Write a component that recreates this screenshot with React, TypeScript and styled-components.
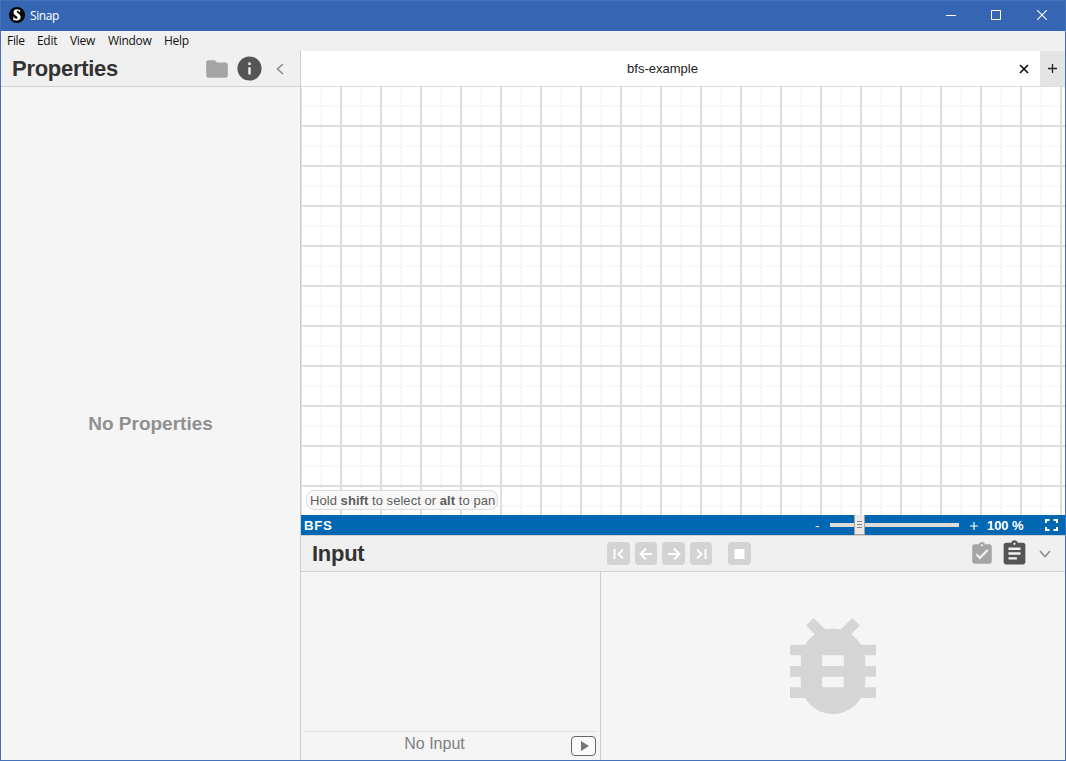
import React from 'react';
import styled, { createGlobalStyle } from 'styled-components';

const GlobalStyle = createGlobalStyle`
  * { box-sizing: border-box; }
  body { margin: 0; font-family: "Liberation Sans", Arial, sans-serif; color: #333; overflow: hidden; }
  svg { display: block; }
`;

const Window = styled.div`
  width: 1066px;
  height: 761px;
  display: flex;
  flex-direction: column;
  border: 1px solid #4472b9;
  background: #f0f0f0;
`;

const TitleBar = styled.header`
  height: 30px;
  flex: none;
  display: flex;
  align-items: center;
  padding: 0 0 2px 8px;
  background: #3665b3;
  color: #fff;
  font: 12px "Open Sans", sans-serif;
`;

const AppTitle = styled.span`
  margin-left: 5px;
  flex: 1;
  letter-spacing: -0.4px;
`;

const WindowButton = styled.div<{ $width: number }>`
  width: ${(p) => p.$width}px;
  height: 28px;
  display: flex;
  align-items: center;
  justify-content: center;
`;

const MenuBar = styled.nav`
  height: 20px;
  flex: none;
  display: flex;
  padding-left: 6px;
  background: #f0f0f0;
  color: #111;
  font: 12px/20px "Open Sans", sans-serif;
`;

const MenuItem = styled.span<{ $width: number }>`
  width: ${(p) => p.$width}px;
  letter-spacing: -0.3px;
  white-space: nowrap;
`;

const Workspace = styled.main`
  flex: 1;
  min-height: 0;
  display: flex;
`;

const Sidebar = styled.aside`
  width: 300px;
  display: flex;
  flex-direction: column;
  background: #f5f5f5;
  border-right: 1px solid #ccc;
`;

const PanelHeader = styled.div`
  height: 36px;
  flex: none;
  display: flex;
  align-items: center;
  background: #f0f0f0;
  border-bottom: 1px solid #d0d0d0;
`;

const PanelTitle = styled.h1<{ $width: number }>`
  width: ${(p) => p.$width}px;
  margin: 0 0 0 11px;
  font-size: 22px;
  line-height: 34px;
  letter-spacing: -0.28px;
`;

const EmptyProperties = styled.div`
  flex: 1;
  display: flex;
  align-items: center;
  justify-content: center;
  color: #909090;
  font-size: 19px;
  font-weight: bold;
`;

const Editor = styled.section`
  flex: 1;
  min-width: 0;
  display: flex;
  flex-direction: column;
`;

const TabBar = styled.div`
  height: 36px;
  flex: none;
  display: flex;
  background: #fff;
  border-bottom: 1px solid #ddd;
`;

const Tab = styled.div`
  flex: 1;
  display: flex;
  align-items: center;
  font-size: 13px;
  color: #222;
`;

const TabLabel = styled.span`
  flex: 1;
  padding-left: 17px;
  text-align: center;
`;

const TabClose = styled.span`
  width: 33px;
  display: flex;
  justify-content: center;
`;

const NewTab = styled.div`
  width: 25px;
  display: flex;
  align-items: center;
  justify-content: center;
  background: #e4e4e4;
`;

const Canvas = styled.div`
  flex: 1;
  position: relative;
  overflow: hidden;
  background: #fff;
`;

const Hint = styled.div`
  position: absolute;
  left: 5px;
  bottom: 5px;
  width: 192px;
  height: 20px;
  padding-left: 3px;
  border: 1px solid #ddd;
  border-radius: 8px;
  background: rgba(247, 247, 247, 0.9);
  color: #5c5c5c;
  font-size: 13px;
  line-height: 20px;
  letter-spacing: 0.05px;
  white-space: nowrap;
`;

const StatusBar = styled.div`
  height: 20px;
  flex: none;
  display: flex;
  align-items: center;
  padding-left: 3px;
  background: #0067b3;
  color: #fff;
  font-size: 13px;
  font-weight: bold;
  line-height: 20px;
`;

const StatusName = styled.span`
  flex: 1;
  padding-top: 1px;
  font-size: 13.3px;
  letter-spacing: 0.6px;
`;

const ZoomOut = styled.span`
  width: 15px;
  padding-top: 1px;
  font-weight: normal;
`;

const Slider = styled.div`
  width: 129px;
  height: 20px;
  display: flex;
  align-items: center;
  padding-left: 24px;
  background: linear-gradient(#e0dcda, #e0dcda) 0 8px / 129px 4px no-repeat;
`;

const SliderThumb = styled.div`
  width: 11px;
  height: 20px;
  padding: 6px 2px 0;
  border: 1px solid #a8a09c;
  border-top: 0;
  background: #ebe7e4;
`;

const Grip = styled.div`
  height: 1px;
  margin-bottom: 2px;
  background: #888;
`;

const ZoomValue = styled.span`
  width: 58px;
  padding-top: 1px;
  letter-spacing: -0.1px;
`;

const BottomPanel = styled.section`
  height: 225px;
  flex: none;
  display: flex;
  flex-direction: column;
  background: #f5f5f5;
`;

const InputHeader = styled(PanelHeader)`
  height: 37px;
  border-top: 1px solid #d0d0d0;
`;

const Controls = styled.div`
  flex: 1;
  display: flex;
`;

const ControlButton = styled.div<{ $width?: number; $gap: number }>`
  width: ${(p) => p.$width ?? 23}px;
  height: 23px;
  margin-right: ${(p) => p.$gap}px;
  display: flex;
  align-items: center;
  justify-content: center;
  border-radius: 4px;
  background: #d3d3d3;
`;

const PanelContent = styled.div`
  flex: 1;
  display: flex;
`;

const InputColumn = styled.div`
  width: 300px;
  padding: 0 4px 4px;
  display: flex;
  flex-direction: column;
  justify-content: flex-end;
  border-right: 1px solid #ccc;
`;

const InputRow = styled.div`
  height: 25px;
  display: flex;
  align-items: flex-end;
  border-top: 1px dotted #ccc;
`;

const InputStatus = styled.span`
  flex: 1;
  height: 24px;
  margin-right: 7px;
  text-align: center;
  color: #808080;
  font-size: 16px;
  line-height: 24px;
`;

const PlayButton = styled.div`
  width: 25px;
  height: 20px;
  display: flex;
  align-items: center;
  justify-content: center;
  border: 1px solid #666;
  border-radius: 4px;
  background: #fafafa;
`;

const DebugColumn = styled.div`
  flex: 1;
  display: flex;
  align-items: center;
  justify-content: center;
`;

const Icon = styled.svg<{ $ml?: number; $mr?: number }>`
  flex: none;
  margin-left: ${(p) => p.$ml ?? 0}px;
  margin-right: ${(p) => p.$mr ?? 0}px;
`;

const columns = Array.from({ length: 20 }, (_, i) => i * 40);
const rows = Array.from({ length: 11 }, (_, i) => i * 40);

function Grid() {
  return (
    <svg width="764" height="429">
      <g stroke="#f5f5f5" strokeWidth="2" strokeDasharray="2 1">
        {columns.map((x) => <line key={x} x1={x + 20} x2={x + 20} y1="0" y2="429" />)}
        {rows.map((y) => <line key={y} x1="0" x2="764" y1={y + 19} y2={y + 19} />)}
      </g>
      <g stroke="#dedede" strokeWidth="2">
        {columns.map((x) => <line key={x} x1={x} x2={x} y1="0" y2="429" />)}
        {rows.map((y) => <line key={y} x1="0" x2="764" y1={y + 39} y2={y + 39} />)}
      </g>
    </svg>
  );
}

export default function App() {
  return (
    <>
      <GlobalStyle />
      <Window>
        <TitleBar>
          <Icon width="16" height="16" viewBox="0 0 16 16">
            <circle cx="8" cy="8" r="8" fill="#000" />
            <path d="M11.1 5.300V2.400l-1 .5C7.500 1.600 4.500 2.800 4.500 5.500c0 3.100 4.200 3.100 4 5.300-.2 1.800-2.700 1.300-3.600-1h-.6v3.600l1.100-.5c2.900 1.500 6.300.1 6.300-2.900C11.700 6.900 7.700 6.500 7.800 4.500c.1-1.300 1.900-.9 2.700.8z" fill="#fff" />
          </Icon>
          <AppTitle>Sinap</AppTitle>
          <WindowButton $width={44}>
            <svg width="10" height="10"><path d="M0 5.500H10" stroke="#fff" /></svg>
          </WindowButton>
          <WindowButton $width={46}>
            <svg width="10" height="10"><path d="M.5.5h9v9h-9z" fill="none" stroke="#fff" /></svg>
          </WindowButton>
          <WindowButton $width={46}>
            <svg width="10" height="10"><path d="M0 0l10 10M10 0L0 10" stroke="#fff" strokeWidth="1.100" /></svg>
          </WindowButton>
        </TitleBar>
        <MenuBar>
          <MenuItem $width={30}>File</MenuItem>
          <MenuItem $width={33}>Edit</MenuItem>
          <MenuItem $width={38}>View</MenuItem>
          <MenuItem $width={56}>Window</MenuItem>
          <MenuItem $width={40}>Help</MenuItem>
        </MenuBar>
        <Workspace>
          <Sidebar>
            <PanelHeader>
              <PanelTitle $width={191}>Properties</PanelTitle>
              <Icon width="26" height="26" viewBox="0 0 24 24" fill="#a5a5a5" $ml={1}>
                <path d="M10 4H4c-1.100 0-1.990.9-1.990 2L2 18c0 1.100.9 2 2 2h16c1.100 0 2-.9 2-2V8c0-1.100-.9-2-2-2h-8l-2-2z" />
              </Icon>
              <Icon width="29" height="29" viewBox="0 0 24 24" fill="#555" $ml={5}>
                <path d="M12 2C6.480 2 2 6.480 2 12s4.480 10 10 10 10-4.480 10-10S17.520 2 12 2zm1 15h-2v-6h2v6zm0-8h-2V7h2v2z" />
              </Icon>
              <Icon width="8" height="12" viewBox="0 0 8 12" $ml={12}>
                <path d="M7 1L1.500 6L7 11" fill="none" stroke="#8c8c8c" strokeWidth="1.600" />
              </Icon>
            </PanelHeader>
            <EmptyProperties>No Properties</EmptyProperties>
          </Sidebar>
          <Editor>
            <TabBar>
              <Tab>
                <TabLabel>bfs-example</TabLabel>
                <TabClose>
                  <svg width="10" height="10"><path d="M1 1l8 8M9 1L1 9" stroke="#111" strokeWidth="1.700" /></svg>
                </TabClose>
              </Tab>
              <NewTab>
                <svg width="9" height="9"><path d="M0 4.500h9M4.500 0v9" stroke="#222" strokeWidth="1.300" /></svg>
              </NewTab>
            </TabBar>
            <Canvas>
              <Grid />
              <Hint>Hold <b>shift</b> to select or <b>alt</b> to pan</Hint>
            </Canvas>
            <StatusBar>
              <StatusName>BFS</StatusName>
              <ZoomOut>-</ZoomOut>
              <Slider>
                <SliderThumb><Grip /><Grip /><Grip /></SliderThumb>
              </Slider>
              <Icon width="8" height="9" $ml={11} $mr={9}>
                <path d="M0 5h8M4 1v8" stroke="#fff" strokeWidth="1.200" />
              </Icon>
              <ZoomValue>100 %</ZoomValue>
              <Icon width="13" height="12" viewBox="0 0 13 12" $mr={7}>
                <path d="M1 4V1h3.500M8.500 1H12v3M12 8v3H8.500M4.500 11H1V8" fill="none" stroke="#fff" strokeWidth="2" />
              </Icon>
            </StatusBar>
            <BottomPanel>
              <InputHeader>
                <PanelTitle $width={295}>Input</PanelTitle>
                <Controls>
                  <ControlButton $gap={5}>
                    <svg width="12" height="12"><path d="M1.500 1v10M10 1.500L5.500 6l4.500 4.500" fill="none" stroke="#fff" strokeWidth="1.900" /></svg>
                  </ControlButton>
                  <ControlButton $width={22} $gap={5}>
                    <svg width="14" height="14"><path d="M13 7H2M7 1.500L1.500 7L7 12.500" fill="none" stroke="#fff" strokeWidth="2" /></svg>
                  </ControlButton>
                  <ControlButton $gap={5}>
                    <svg width="14" height="14"><path d="M1 7h11M7 1.500L12.500 7L7 12.500" fill="none" stroke="#fff" strokeWidth="2" /></svg>
                  </ControlButton>
                  <ControlButton $width={22} $gap={16}>
                    <svg width="12" height="12"><path d="M10.500 1v10M2 1.500L6.500 6L2 10.500" fill="none" stroke="#fff" strokeWidth="1.900" /></svg>
                  </ControlButton>
                  <ControlButton $gap={0}>
                    <svg width="11" height="10"><path d="M.5 0h10v10H.5z" fill="#fff" /></svg>
                  </ControlButton>
                </Controls>
                <Icon width="26" height="26" viewBox="0 0 24 24" fill="#a5a5a5">
                  <path d="M19 3h-4.180C14.400 1.840 13.300 1 12 1c-1.300 0-2.400.84-2.820 2H5c-1.100 0-2 .9-2 2v14c0 1.100.9 2 2 2h14c1.100 0 2-.9 2-2V5c0-1.100-.9-2-2-2zm-7 0c.55 0 1 .45 1 1s-.45 1-1 1-1-.45-1-1 .45-1 1-1zm-2 14l-4-4 1.410-1.410L10 14.170l6.590-6.590L18 9l-8 8z" />
                </Icon>
                <Icon width="29" height="29" viewBox="0 0 24 24" fill="#555" $ml={5}>
                  <path d="M19 3h-4.180C14.400 1.840 13.300 1 12 1c-1.300 0-2.400.84-2.820 2H5c-1.100 0-2 .9-2 2v14c0 1.100.9 2 2 2h14c1.100 0 2-.9 2-2V5c0-1.100-.9-2-2-2zm-7 0c.55 0 1 .45 1 1s-.45 1-1 1-1-.45-1-1 .45-1 1-1zm2 14H7v-2h7v2zm3-4H7v-2h10v2zm0-4H7V7h10v2z" />
                </Icon>
                <Icon width="12" height="8" viewBox="0 0 12 8" $ml={10} $mr={14}>
                  <path d="M1 1L6 6.500L11 1" fill="none" stroke="#8c8c8c" strokeWidth="1.600" />
                </Icon>
              </InputHeader>
              <PanelContent>
                <InputColumn>
                  <InputRow>
                    <InputStatus>No Input</InputStatus>
                    <PlayButton>
                      <Icon width="8" height="10" $ml={2}><path d="M0 0l8 5-8 5z" fill="#777" /></Icon>
                    </PlayButton>
                  </InputRow>
                </InputColumn>
                <DebugColumn>
                  <svg width="86" height="96" viewBox="4 3 16 18" preserveAspectRatio="none" fill="#d5d5d5">
                    <path d="M20 8h-2.810c-.45-.78-1.070-1.450-1.820-1.960L17 4.410 15.590 3l-2.170 2.170C12.960 5.060 12.490 5 12 5c-.49 0-.96.06-1.410.17L8.410 3 7 4.410l1.620 1.630C7.880 6.550 7.260 7.220 6.810 8H4v2h2.090c-.05.33-.09.66-.09 1v1H4v2h2v1c0 .34.040.67.090 1H4v2h2.810c1.040 1.790 2.970 3 5.190 3s4.150-1.210 5.190-3H20v-2h-2.090c.05-.33.090-.66.090-1v-1h2v-2h-2v-1c0-.34-.040-.67-.090-1H20V8zm-6 8h-4v-2h4v2zm0-4h-4v-2h4v2z" />
                  </svg>
                </DebugColumn>
              </PanelContent>
            </BottomPanel>
          </Editor>
        </Workspace>
      </Window>
    </>
  );
}
